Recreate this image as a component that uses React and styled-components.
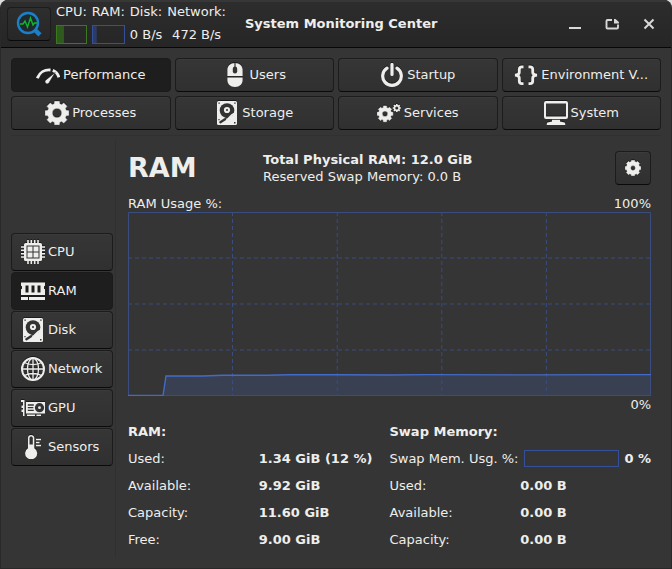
import React from "react";
import styled, { createGlobalStyle, css } from "styled-components";

const GlobalStyle = createGlobalStyle`
  *, *::before, *::after { box-sizing: border-box; }
  html { background: #dcdcdc; }
  body { margin: 0; }
  body, button {
    font-family: "DejaVu Sans", sans-serif;
    font-size: 13px;
    line-height: 17px;
    color: #eeeeec;
  }
`;

const Window = styled.div`
  display: flex;
  flex-direction: column;
  min-height: 100vh;
  border: 1px solid #292929;
  border-top: 0;
  border-radius: 8px 8px 0 0;
  background: #353535;
  overflow: hidden;
`;

const raised = css`
  border: 1px solid #1c1c1c;
  border-bottom-color: #0a0a0a;
  border-radius: 4px;
  background: linear-gradient(#363636, #303030);
  box-shadow: inset 0 1px #3b3b3b;
  color: #eeeeec;
  cursor: pointer;
`;

const TitleBar = styled.header`
  display: flex;
  align-items: center;
  height: 48px;
  padding: 0 4px 0 6px;
  background: linear-gradient(#2d2d2d, #262626);
  border-bottom: 1px solid #070707;
  box-shadow: inset 0 2px #373737;
`;

const LogoButton = styled.button`
  ${raised}
  display: grid;
  place-items: center;
  width: 44px;
  height: 34px;
  padding: 0;
  background: linear-gradient(#2e2e2e, #272727);
  box-shadow: none;
`;

const Summary = styled.div`
  display: flex;
  gap: 5px;
  margin-left: 5px;
`;

const SummaryItem = styled.div`
  display: grid;
  grid-template-rows: 17px 19px;
  row-gap: 5px;
`;

const SummaryValue = styled.span`
  text-align: center;
  line-height: 20px;
  white-space: nowrap;
`;

const Bar = styled.div`
  min-height: 17px;
  flex: 1;
  border: 1px solid ${(p) => p.$line};
  background: linear-gradient(${(p) => p.$fill}, ${(p) => p.$fill}) no-repeat;
  background-size: ${(p) => p.$value}% 100%;
`;

const Title = styled.h1`
  flex: 1;
  margin: 0 0 0 19px;
  font-size: 13px;
  line-height: 17px;
`;

const WindowControls = styled.div`
  display: flex;
`;

const ControlButton = styled.button`
  display: grid;
  place-items: center;
  width: 37px;
  height: 32px;
  padding: 0;
  border: 0;
  background: none;
  color: #d8d8d6;
`;

const Body = styled.div`
  flex: 1;
  display: flex;
  flex-direction: column;
  padding: 10px 10px 11px;
`;

const Tabs = styled.nav`
  display: grid;
  grid-template-columns: repeat(4, minmax(0, 1fr));
  gap: 4px;
  padding-bottom: 5px;
  border-bottom: 1px solid #303030;
`;

const NavButton = styled.button`
  ${raised}
  display: flex;
  align-items: center;
  justify-content: ${(p) => (p.$side ? "flex-start" : "center")};
  gap: 3px;
  height: ${(p) => (p.$side ? 38 : 34)}px;
  padding: 0 9px;
  white-space: nowrap;
  ${(p) =>
    p.$active &&
    css`
      background: #1e1e1e;
      border-color: #1b1b1b;
      box-shadow: none;
    `}
`;

const NavLabel = styled.span`
  padding-bottom: 2px;
`;

const Icon = styled.svg`
  flex: none;
  display: block;
  width: ${(p) => p.$size || 24}px;
  height: ${(p) => p.$size || 24}px;
  filter: drop-shadow(0 -1px #1c1c1c);
`;

const Content = styled.div`
  flex: 1;
  display: grid;
  grid-template-columns: 102px minmax(0, 1fr);
  gap: 2px;
  padding-top: 4px;
`;

const Sidebar = styled.nav`
  display: flex;
  flex-direction: column;
  justify-content: center;
  gap: 1px;
  padding-top: 2px;
`;

const Panel = styled.main`
  display: flex;
  flex-direction: column;
  padding: 11px 10px 4px 12px;
  border-left: 1px solid #303030;
`;

const PanelHeader = styled.div`
  display: grid;
  grid-template-columns: 3fr 8fr auto;
  align-items: center;
  gap: 5px;
  min-height: 34px;
`;

const Heading = styled.h2`
  margin: 0;
  font-size: 27px;
  line-height: 34px;
`;

const Device = styled.div`
  display: flex;
  flex-direction: column;
`;

const SettingsButton = styled.button`
  ${raised}
  display: grid;
  place-items: center;
  width: 36px;
  height: 34px;
  padding: 0;
`;

const ChartLabels = styled.div`
  display: flex;
  justify-content: ${(p) => (p.$end ? "flex-end" : "space-between")};
  padding-top: ${(p) => (p.$end ? 0 : 10)}px;
`;

const Chart = styled.svg`
  flex: 1 1 120px;
  display: block;
  width: 100%;
  min-height: 120px;
  height: 120px;
`;

const Details = styled.div`
  display: grid;
  grid-template-columns: 1fr 1fr;
  padding-top: 5px;
`;

const GroupTitle = styled.h3`
  margin: 0;
  font-size: 13px;
  line-height: 27px;
`;

const List = styled.dl`
  margin: 0;
`;

const Row = styled.div`
  display: grid;
  grid-template-columns: ${(p) => (p.$meter ? "auto 1fr" : "1fr 1fr")};
  column-gap: ${(p) => (p.$meter ? 6 : 0)}px;
  line-height: 27px;
  white-space: nowrap;
`;

const Term = styled.dt``;

const Value = styled.dd`
  display: flex;
  align-items: center;
  gap: 5px;
  margin: 0;
  font-weight: bold;
`;

const FG = "#eeeeec";
const BG = "#333333";

function gearPath(cx, cy, outer, inner, hole) {
  const pts = [];
  for (let i = 0; i < 8; i++) {
    const a = (i * Math.PI) / 4 - Math.PI / 2;
    [
      [-0.27, inner],
      [-0.19, outer],
      [0.19, outer],
      [0.27, inner],
    ].forEach(([d, r]) =>
      pts.push(
        `${(cx + r * Math.cos(a + d)).toFixed(2)} ${(cy + r * Math.sin(a + d)).toFixed(2)}`
      )
    );
  }
  return `M${pts.join("L")}ZM${cx - hole} ${cy}a${hole} ${hole} 0 1 0 ${2 * hole} 0a${hole} ${hole} 0 1 0 ${-2 * hole} 0Z`;
}

const drive = (
  <>
    <rect x="2" width="20" height="24" rx="1.5" fill={FG} />
    <circle cx="12" cy="9.5" r="7.3" fill={BG} />
    <circle cx="12" cy="9" r="3.1" fill={FG} />
    <circle cx="12" cy="9" r="1" fill={BG} />
    <path d="M20 11.500L15 18l-4-.5 3-3.500z" fill={FG} />
    <path d="M5.400 21.200l4.600-3M11.500 16.500l4.500-4.500" fill="none" stroke={BG} strokeWidth="2.400" strokeLinecap="round" />
    <path d="M3.400 1.400h1.400v1.400H3.400zM19.200 1.400h1.400v1.400h-1.400zM3.400 18h1.200v1.300H3.400zM19 21h1.500v1.500H19z" fill={BG} />
  </>
);

const icons = {
  performance: (
    <>
      <path d="M1.300 15.200C3.500 9.500 8.800 6.400 14.500 7" fill="none" stroke={FG} strokeWidth="2.900" />
      <path d="M16.800 7.400Q21.500 9.300 22.900 14.400" fill="none" stroke={FG} strokeWidth="2.900" />
      <path d="M19.200 9.500L9.900 16.900a2.200 2.200 0 1 0 3.300 2.700z" fill={FG} stroke="#1e1e1e" strokeWidth=".6" />
    </>
  ),
  users: (
    <>
      <path d="M12 0C7.300 0 4.400 3 4.400 7v6h15.200V7c0-4-2.900-7-7.600-7zM4.400 14.400V17c0 4 3 7 7.600 7s7.600-3 7.600-7v-2.600z" fill={FG} />
      <path d="M12 0v4" stroke={BG} strokeWidth="1.200" />
      <rect x="9.800" y="3.500" width="4.400" height="7" rx="2.200" fill={BG} />
    </>
  ),
  startup: (
    <path d="M7 5.200a9.300 9.300 0 1 0 10 0M12 1.500v10" fill="none" stroke={FG} strokeWidth="3.200" strokeLinecap="round" />
  ),
  environment: (
    <path
      d="M9.500 3.800H8C6 3.800 5.300 4.800 5.300 6.500v2.800C5.300 11.200 4 12 1 12.200c3 .2 4.300 1 4.300 2.900V18c0 1.700 .7 2.700 2.700 2.700h1.500M14.500 3.800H16c2 0 2.700 1 2.700 2.700v2.800c0 1.900 1.300 2.700 4.300 2.900-3 .2-4.300 1-4.300 2.900V18c0 1.700-.7 2.700-2.700 2.700h-1.500"
      fill="none"
      stroke={FG}
      strokeWidth="2.800"
    />
  ),
  processes: <path d={gearPath(12, 12, 12, 9.5, 4.8)} fill={FG} stroke={FG} strokeWidth=".5" fillRule="evenodd" />,
  storage: drive,
  disk: drive,
  services: (
    <>
      <path d={gearPath(8, 12.8, 8, 6.4, 2.8)} fill={FG} stroke={FG} strokeWidth=".5" fillRule="evenodd" />
      <path d={gearPath(19.8, 7, 4.1, 3.2, 1.5)} fill={FG} fillRule="evenodd" />
    </>
  ),
  system: (
    <>
      <path d="M2 0h20q2 0 2 2v14q0 2-2 2H2q-2 0-2-2V2q0-2 2-2zm0 2.500v13h20v-13z" fill={FG} fillRule="evenodd" />
      <path d="M8 18.800h8v1.700l4.500 1q.8.300.8 2.500H2.700q0-2.200.8-2.500l4.500-1z" fill={FG} />
    </>
  ),
  cpu: (
    <>
      <path d="M7 0v24M10.300 0v24M13.700 0v24M17 0v24M0 7h24M0 10.300h24M0 13.700h24M0 17h24" stroke={FG} strokeWidth="1.600" />
      <rect x="3" y="3" width="18" height="18" rx="1.500" fill={FG} />
      <path d="M5.500 5.500h13v13h-13z" fill={BG} />
      <path d="M6.500 6.500h5v5h-5zM12.500 6.500h5v5h-5zM6.500 12.500h5v5h-5zM12.500 12.500h5v5h-5z" fill={FG} />
    </>
  ),
  ram: (
    <>
      <path d="M0 3.500h24v3.200l-1 .6v2.400l1 .6V16H0v-5.700l1-.6V7.300l-1-.6zM0 18h7v3H0zM8 18h16v3H8z" fill={FG} />
      <path d="M4.500 6.500h3v7h-3zM10.500 6.500h3v7h-3zM16.500 6.500h3v7h-3z" fill="#1e1e1e" />
    </>
  ),
  network: (
    <g fill="none" stroke={FG} strokeWidth="1.300">
      <circle cx="12" cy="12" r="11" strokeWidth="2" />
      <ellipse cx="12" cy="12" rx="5.500" ry="11" />
      <path d="M12 1v22M1 12h22M3.500 5.500c4.500 2.700 12.500 2.700 17 0M3.500 18.500c4.500-2.700 12.500-2.700 17 0" />
    </g>
  ),
  gpu: (
    <>
      <path d="M0 4h3.500v16H2v-4H.5v-2.500H2V12H.5V9.500H2V6H0zM5 6h19v11.500H5zM6 18.500h8V20H6zM15.500 18.500H20V20h-4.500z" fill={FG} />
      <path d="M6.800 9h6M6.800 11.700h5.500M6.800 14.400h6" stroke={BG} strokeWidth="1.300" />
      <circle cx="18.500" cy="11.700" r="4.600" fill={BG} />
      <circle cx="18.500" cy="11.700" r="1.400" fill={FG} />
    </>
  ),
  sensors: (
    <>
      <path d="M10 0C8.200 0 7 1.300 7 3v10.200a6 6 0 1 0 6.300 0V3c0-1.700-1.500-3-3.300-3z" fill={FG} />
      <path d="M8.500 9.500V3.200c0-2.300 3.300-2.300 3.300 0v6.300z" fill={BG} />
      <path d="M15 4.500h5M15 7.500h3.500M15 10.500h5" stroke={FG} strokeWidth="1.500" />
    </>
  ),
};

const tabs = [
  ["performance", "Performance"],
  ["users", "Users"],
  ["startup", "Startup"],
  ["environment", "Environment V..."],
  ["processes", "Processes"],
  ["storage", "Storage"],
  ["services", "Services"],
  ["system", "System"],
];

const resources = [
  ["cpu", "CPU"],
  ["ram", "RAM"],
  ["disk", "Disk"],
  ["network", "Network"],
  ["gpu", "GPU"],
  ["sensors", "Sensors"],
];

const ramDetails = [
  ["Used:", "1.34 GiB (12 %)"],
  ["Available:", "9.92 GiB"],
  ["Capacity:", "11.60 GiB"],
  ["Free:", "9.00 GiB"],
];

const swapDetails = [
  ["Used:", "0.00 B"],
  ["Available:", "0.00 B"],
  ["Capacity:", "0.00 B"],
];

const usage = "35 183.500 38 164 75 164 95 163.300 140 163.200 160 162.700 210 162.700 260 163 300 162.600 400 162.900 523 162.600";

function NavItem({ icon, label, active, side }) {
  return (
    <NavButton type="button" $active={active} $side={side} aria-current={active ? "page" : undefined}>
      <Icon viewBox="0 0 24 24" aria-hidden="true">{icons[icon]}</Icon>
      <NavLabel>{label}</NavLabel>
    </NavButton>
  );
}

function DetailRow({ label, value }) {
  return (
    <Row>
      <Term>{label}</Term>
      <Value>{value}</Value>
    </Row>
  );
}

function UsageChart() {
  const line = { vectorEffect: "non-scaling-stroke" };
  return (
    <Chart viewBox="0 0 523 184" preserveAspectRatio="none" role="img" aria-label="RAM usage history">
      <polygon points={`${usage} 523 184 35 184`} fill="#384051" />
      <g fill="none" stroke="#3a4c80" strokeWidth="1">
        <rect x=".5" y=".5" width="522" height="183" {...line} />
        <g strokeDasharray="4 3">
          {[104.5, 209.2, 313.8, 418.4].map((x) => (
            <path key={x} d={`M${x} 0V184`} {...line} />
          ))}
        </g>
        <g strokeDasharray="4 3">
          {[46, 92, 138].map((y) => (
            <path key={y} d={`M0 ${y}H523`} {...line} />
          ))}
        </g>
      </g>
      <polyline points={`0 183.500 ${usage}`} fill="none" stroke="#426bc9" strokeWidth="1.400" {...line} />
    </Chart>
  );
}

export default function App() {
  return (
    <>
      <GlobalStyle />
      <Window>
        <TitleBar>
          <LogoButton type="button" aria-label="Application menu">
            <svg width="26" height="26" viewBox="0 0 26 26" aria-hidden="true">
              <circle cx="12" cy="12" r="10" fill="#20292e" stroke="#1b80c8" strokeWidth="2.400" />
              <path d="M18.500 18.500l5.500 5.300" stroke="#1b80c8" strokeWidth="4.500" />
              <path d="M4 13h3l2-3 2.500 6 3-9 2.500 7 1.500-2H21" fill="none" stroke="#11b52b" strokeWidth="1.400" />
            </svg>
          </LogoButton>
          <Summary>
            <SummaryItem>
              <span>CPU:</span>
              <Bar role="meter" aria-label="CPU usage" aria-valuenow={24} $line="#3a7a1c" $fill="#2f5a1e" $value={24} />
            </SummaryItem>
            <SummaryItem>
              <span>RAM:</span>
              <Bar role="meter" aria-label="RAM usage" aria-valuenow={12} $line="#35509a" $fill="#2c3c66" $value={12} />
            </SummaryItem>
            <SummaryItem>
              <span>Disk:</span>
              <SummaryValue>0 B/s</SummaryValue>
            </SummaryItem>
            <SummaryItem>
              <span>Network:</span>
              <SummaryValue>472 B/s</SummaryValue>
            </SummaryItem>
          </Summary>
          <Title>System Monitoring Center</Title>
          <WindowControls>
            <ControlButton type="button" aria-label="Minimize">
              <svg width="16" height="16" viewBox="0 0 16 16" aria-hidden="true">
                <path d="M2 12h12" stroke="currentColor" strokeWidth="2" />
              </svg>
            </ControlButton>
            <ControlButton type="button" aria-label="Maximize">
              <svg width="16" height="16" viewBox="0 0 16 16" aria-hidden="true">
                <path d="M8 4H3.500Q2.500 4 2.500 5v6.500q0 1 1 1h9.500q1 0 1-1V8.500" fill="none" stroke="currentColor" strokeWidth="1.900" />
                <path d="M10 3h1.500l3.400 3v1.500H10z" fill="currentColor" />
              </svg>
            </ControlButton>
            <ControlButton type="button" aria-label="Close">
              <svg width="16" height="16" viewBox="0 0 16 16" aria-hidden="true">
                <path d="M3.500 3.500l9 9M12.500 3.500l-9 9" stroke="currentColor" strokeWidth="2" />
              </svg>
            </ControlButton>
          </WindowControls>
        </TitleBar>
        <Body>
          <Tabs aria-label="Views">
            {tabs.map(([icon, label]) => (
              <NavItem key={icon} icon={icon} label={label} active={icon === "performance"} />
            ))}
          </Tabs>
          <Content>
            <Sidebar aria-label="Resources">
              {resources.map(([icon, label]) => (
                <NavItem key={icon} icon={icon} label={label} active={icon === "ram"} side />
              ))}
            </Sidebar>
            <Panel>
              <PanelHeader>
                <Heading>RAM</Heading>
                <Device>
                  <strong>Total Physical RAM: 12.0 GiB</strong>
                  <span>Reserved Swap Memory: 0.0 B</span>
                </Device>
                <SettingsButton type="button" aria-label="RAM settings">
                  <Icon $size={16} viewBox="0 0 24 24" aria-hidden="true">
                    <path d={gearPath(12, 12, 12, 10, 3.6)} fill={FG} stroke={FG} strokeWidth=".5" fillRule="evenodd" />
                  </Icon>
                </SettingsButton>
              </PanelHeader>
              <ChartLabels>
                <span>RAM Usage %:</span>
                <span>100%</span>
              </ChartLabels>
              <UsageChart />
              <ChartLabels $end>
                <span>0%</span>
              </ChartLabels>
              <Details>
                <section>
                  <GroupTitle>RAM:</GroupTitle>
                  <List>
                    {ramDetails.map(([label, value]) => (
                      <DetailRow key={label} label={label} value={value} />
                    ))}
                  </List>
                </section>
                <section>
                  <GroupTitle>Swap Memory:</GroupTitle>
                  <List>
                    <Row $meter>
                      <Term>Swap Mem. Usg. %:</Term>
                      <Value>
                        <Bar role="meter" aria-label="Swap usage" aria-valuenow={0} $line="#35509a" $fill="#2c3c66" $value={0} />
                        0 %
                      </Value>
                    </Row>
                    {swapDetails.map(([label, value]) => (
                      <DetailRow key={label} label={label} value={value} />
                    ))}
                  </List>
                </section>
              </Details>
            </Panel>
          </Content>
        </Body>
      </Window>
    </>
  );
}
